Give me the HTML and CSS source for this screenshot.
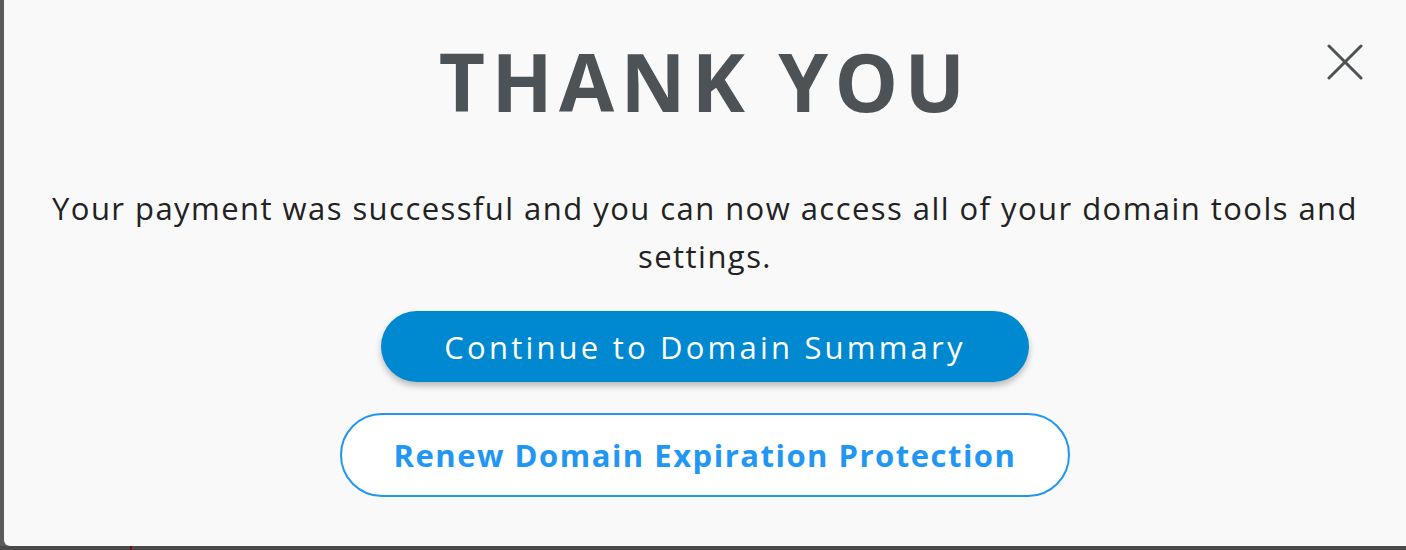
FILE: index.html
```html
<!DOCTYPE html>
<html lang="en">
<head>
<meta charset="utf-8">
<title>Thank You</title>
<link rel="stylesheet" href="styles.css">
</head>
<body>
<div class="page">
  <div class="modal">
    <button class="close" aria-label="Close">
      <svg width="36" height="36" viewBox="0 0 36 36"><path d="M2 2 L34 34 M34 2 L2 34" stroke="#4d5257" stroke-width="3" stroke-linecap="round" fill="none"/></svg>
    </button>
    <h1 class="title">THANK YOU</h1>
    <p class="message">Your payment was successful and you can now access all of your domain tools and settings.</p>
    <button class="btn btn-primary">Continue to Domain Summary</button>
    <button class="btn btn-outline">Renew Domain Expiration Protection</button>
  </div>
  <div class="underlay"><span class="marker"></span></div>
</div>
</body>
</html>
```

FILE: styles.css
```css
html, body {
  margin: 0;
  padding: 0;
  background: #5a5a5a;
  height: 550px;
  overflow: hidden;
}
.page {
  display: flex;
  flex-direction: column;
  width: 1406px;
  height: 550px;
}
.modal {
  position: relative;
  margin-left: 4px;
  height: 546px;
  box-sizing: border-box;
  background: #f9f9f9;
  border-bottom-left-radius: 6px;
  display: flex;
  flex-direction: column;
  align-items: center;
  font-family: "Open Sans", "Liberation Sans", sans-serif;
  padding-top: 41px;
}
.underlay {
  height: 4px;
  background: #4a4a4a;
  display: flex;
}
.marker {
  margin-left: 130px;
  width: 2px;
  background: #6b1010;
}
.close {
  position: absolute;
  top: 44px;
  right: 43px;
  width: 36px;
  height: 36px;
  padding: 0;
  border: 0;
  background: transparent;
  display: flex;
}
.title {
  margin: 0;
  font-size: 80px;
  line-height: 80px;
  font-weight: 700;
  letter-spacing: 6.3px;
  color: #4d5257;
}
.message {
  margin: 63px 0 0;
  width: 1340px;
  text-align: center;
  font-size: 31px;
  line-height: 48px;
  letter-spacing: 1.45px;
  color: #222;
  font-weight: 400;
}
.btn {
  font-family: inherit;
  border-radius: 999px;
  cursor: pointer;
  box-sizing: border-box;
  padding: 0;
}
.btn-primary {
  margin-top: 31px;
  width: 648px;
  height: 71px;
  border: 0;
  background: #0088d1;
  color: #fff;
  font-size: 31px;
  letter-spacing: 3.2px;
  box-shadow: 0 4px 6px rgba(0,0,0,0.25);
}
.btn-outline {
  margin-top: 31px;
  width: 730px;
  height: 84px;
  border: 2px solid #2196f3;
  background: #fff;
  color: #2196f3;
  font-size: 31px;
  letter-spacing: 1.5px;
  font-weight: 700;
}
```
